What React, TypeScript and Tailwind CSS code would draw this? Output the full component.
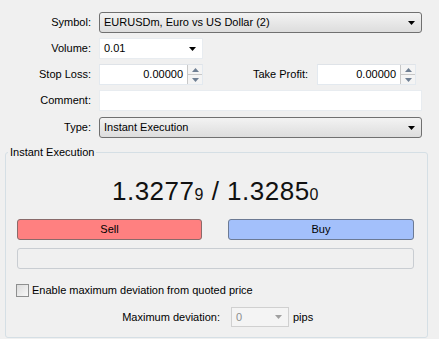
import React from "react";

function Arrow({ muted }: { muted?: boolean }) {
  return (
    <svg width="7" height="4" viewBox="0 0 7 4" className="shrink-0">
      <path d="M0 0h7L3.5 4z" fill={muted ? "#a0a0a0" : "#000"} />
    </svg>
  );
}

function Combo({ text, className }: { text: string; className?: string }) {
  return (
    <div
      className={`flex items-center h-[21px] rounded-[3px] border border-[#707070] bg-gradient-to-b from-[#f3f3f3] to-[#dddddd] pl-[4px] pr-[6px] ${className ?? ""}`}
    >
      <span className="flex-1 truncate">{text}</span>
      <Arrow />
    </div>
  );
}

function Spin({ value, className }: { value: string; className?: string }) {
  return (
    <div className={`flex h-[21px] bg-white border border-[#e3e9ef] border-t-[#dfe3e8] ${className ?? ""}`}>
      <span className="flex-1 text-right pr-[4px] leading-[19px]">{value}</span>
      <div className="flex flex-col w-[15px] border-l border-[#c8c8c8] bg-[#f4f4f4]">
        <div className="flex-1 flex items-center justify-center border-b border-[#c8c8c8]">
          <svg width="7" height="4" viewBox="0 0 7 4"><path d="M0 4h7L3.5 0z" fill="#6f7f93" /></svg>
        </div>
        <div className="flex-1 flex items-center justify-center">
          <svg width="7" height="4" viewBox="0 0 7 4"><path d="M0 0h7L3.5 4z" fill="#6f7f93" /></svg>
        </div>
      </div>
    </div>
  );
}

function Label({ children, w = "w-[91px]" }: { children: React.ReactNode; w?: string }) {
  return <span className={`${w} text-right shrink-0`}>{children}</span>;
}

export default function App() {
  return (
    <div
      className="w-[439px] h-[339px] bg-[#f0f0f0] overflow-hidden text-[11px] text-[#000] leading-[13px]"
      style={{ fontFamily: '"Liberation Sans", Arial, sans-serif' }}
    >
      <div className="flex flex-col gap-[5px] pt-[12px]">
        <div className="flex items-center gap-[8px]">
          <Label>Symbol:</Label>
          <Combo text="EURUSDm, Euro vs US Dollar (2)" className="w-[323px]" />
        </div>
        <div className="flex items-center gap-[8px]">
          <Label>Volume:</Label>
          <div className="flex items-center h-[21px] w-[104px] bg-white border border-[#e8ecf0] pl-[4px] pr-[6px]">
            <span className="flex-1">0.01</span>
            <Arrow />
          </div>
        </div>
        <div className="flex items-center">
          <Label>Stop Loss:</Label>
          <Spin value="0.00000" className="ml-[8px] w-[104px]" />
          <Label w="w-[105px]">Take Profit:</Label>
          <Spin value="0.00000" className="ml-[9px] w-[99px]" />
        </div>
        <div className="flex items-center gap-[8px]">
          <Label>Comment:</Label>
          <div className="h-[21px] w-[323px] bg-white border border-[#e8ecf0]" />
        </div>
        <div className="flex items-center gap-[8px] mt-[1px]">
          <Label>Type:</Label>
          <Combo text="Instant Execution" className="w-[323px]" />
        </div>
      </div>

      <fieldset className="ml-[5px] mt-[8px] w-[423px] h-[192px] border border-[#d5dfe5] rounded-[3px] pl-[11px] pr-[13px]">
        <legend className="-ml-[9px] px-[2px]">Instant Execution</legend>
        <div className="text-center text-[26px] leading-[28px] text-[#111] mt-[18px] tracking-[0.5px] whitespace-pre">
          1.3277<span className="text-[16px]">9</span>{" / "}1.3285<span className="text-[16px]">0</span>
        </div>
        <div className="flex justify-between mt-[10px]">
          <button className="w-[185px] h-[21px] rounded-[3px] border border-[#8a6a6a] bg-[#ff8080] text-[11px]">
            Sell
          </button>
          <button className="w-[186px] h-[21px] rounded-[3px] border border-[#6c7a94] bg-[#a3c0fb] text-[11px]">
            Buy
          </button>
        </div>
        <div className="mt-[8px] h-[21px] rounded-[3px] border border-[#c9cdd2] bg-[#f0f0f0]" />
        <div className="flex items-center mt-[15px] -ml-[1px]">
          <div className="w-[13px] h-[13px] border border-[#8e8f8f] bg-gradient-to-br from-[#dcdcdc] to-[#f8f8f8]" />
          <span className="ml-[3px]">Enable maximum deviation from quoted price</span>
        </div>
        <div className="flex items-center mt-[10px]">
          <span className="w-[203px] text-right">Maximum deviation:</span>
          <div className="ml-[11px] flex items-center h-[20px] w-[58px] border border-[#d0d0d0] bg-[#f4f4f4] pl-[4px] pr-[6px] text-[#8d8d8d]">
            <span className="flex-1">0</span>
            <Arrow muted />
          </div>
          <span className="ml-[4px]">pips</span>
        </div>
      </fieldset>
    </div>
  );
}
